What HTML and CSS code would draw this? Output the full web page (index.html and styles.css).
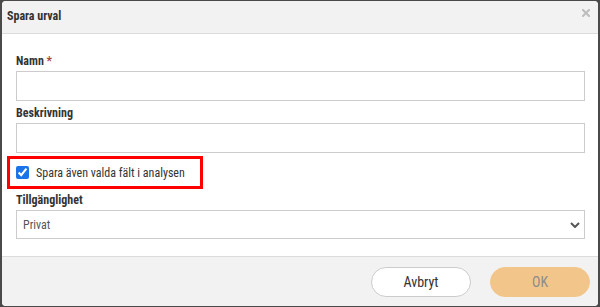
FILE: index.html
```html
<!DOCTYPE html>
<html lang="sv">
<head>
  <meta charset="UTF-8" />
  <meta name="viewport" content="width=device-width, initial-scale=1">
  <title>Spara urval</title>
  <link rel="stylesheet" href="styles.css">
</head>
<body>

  <div class="dialog">
    <div class="dialog-header">
      <h2>Spara urval</h2>
      <button class="close-button" type="button" aria-label="Stäng">
        <svg width="8" height="8" viewBox="0 0 8 8">
          <path d="M1 1 L7 7 M7 1 L1 7" stroke="#bdbdbd" stroke-width="2" stroke-linecap="square" />
        </svg>
      </button>
    </div>

    <form class="dialog-body">
      <label for="namn">Namn <span class="required">*</span></label>
      <input type="text" id="namn" name="namn">

      <label for="beskrivning">Beskrivning</label>
      <input type="text" id="beskrivning" name="beskrivning">

      <div class="highlight">
        <label class="check-row" for="spara_falt">
          <input type="checkbox" id="spara_falt" name="spara_falt" checked>
          Spara även valda fält i analysen
        </label>
      </div>

      <label for="tillganglighet">Tillgänglighet</label>
      <div class="select-wrap">
        <select id="tillganglighet" name="tillganglighet">
          <option>Privat</option>
          <option>Delad</option>
        </select>
        <svg class="chevron" width="10" height="6" viewBox="0 0 10 6">
          <path d="M1 1 L5 5 L9 1" fill="none" stroke="#555" stroke-width="2" />
        </svg>
      </div>
    </form>

    <div class="dialog-footer">
      <button type="button" class="btn btn-cancel">Avbryt</button>
      <button type="button" class="btn btn-ok" disabled>OK</button>
    </div>
  </div>

</body>
</html>
```

FILE: styles.css
```css
* {
  box-sizing: border-box;
  margin: 0;
  padding: 0;
}

html,
body {
  height: 100%;
}

body {
  font-family: "Roboto Condensed", "Liberation Sans Narrow", Roboto, sans-serif;
  font-stretch: condensed;
  font-size: 12px;
  color: #333;
  background: #4a4a4a;
  padding: 1px 2px 1px 2px;
  display: flex;
  overflow: hidden;
}

.dialog {
  flex: 1;
  display: flex;
  flex-direction: column;
  background: white;
  border-radius: 4px;
  overflow: hidden;
}

.dialog-header {
  height: 33px;
  background: #f2f2f2;
  border-bottom: 1px solid #dcdcdc;
  display: flex;
  align-items: center;
  justify-content: space-between;
  padding: 0 5px 3px 5px;
}

.dialog-header h2 {
  font-size: 12px;
  font-weight: bold;
  color: #333;
}

.close-button {
  background: none;
  border: none;
  display: flex;
  margin-right: 3px;
  margin-top: -5px;
}

.dialog-body {
  flex: 1;
  display: flex;
  flex-direction: column;
  align-items: flex-start;
  padding: 19px 13px 0 14px;
  border-bottom: 1px solid #dcdcdc;
}

.dialog-body > label {
  display: block;
  font-weight: bold;
  line-height: 16px;
  margin-bottom: 2px;
}

.required {
  color: #a94442;
}

input[type="text"],
select {
  width: 100%;
  height: 30px;
  border: 1px solid #cccccc;
  background: white;
  font-family: inherit;
  font-stretch: condensed;
  font-size: 12px;
  color: #555;
  margin-bottom: 4px;
}

.highlight {
  border: 3px solid #ff0000;
  margin: -1px 0 3px -9px;
  width: 196px;
  height: 33px;
  display: flex;
  align-items: center;
  padding-left: 6px;
}

.check-row {
  display: flex;
  align-items: center;
  gap: 7px;
  font-size: 12px;
  color: #333;
}

.check-row input {
  width: 13px;
  height: 13px;
  accent-color: #1a73e8;
  margin: 0;
}

.select-wrap {
  position: relative;
  width: 100%;
}

select {
  appearance: none;
  padding-left: 6px;
  height: 29px;
}

.chevron {
  position: absolute;
  right: 5px;
  top: 12px;
}

.dialog-footer {
  height: 49px;
  background: #f2f2f2;
  display: flex;
  justify-content: flex-end;
  gap: 19px;
  padding: 10px 8px 0 0;
}

.btn {
  width: 100px;
  height: 30px;
  border-radius: 15px;
  font-family: inherit;
  font-stretch: condensed;
  font-size: 14px;
}

.btn-cancel {
  background: white;
  border: 1px solid #cccccc;
  color: #333;
}

.btn-ok {
  background: #f2c68a;
  border: 1px solid #f2c68a;
  color: #8c8c8c;
}
```
